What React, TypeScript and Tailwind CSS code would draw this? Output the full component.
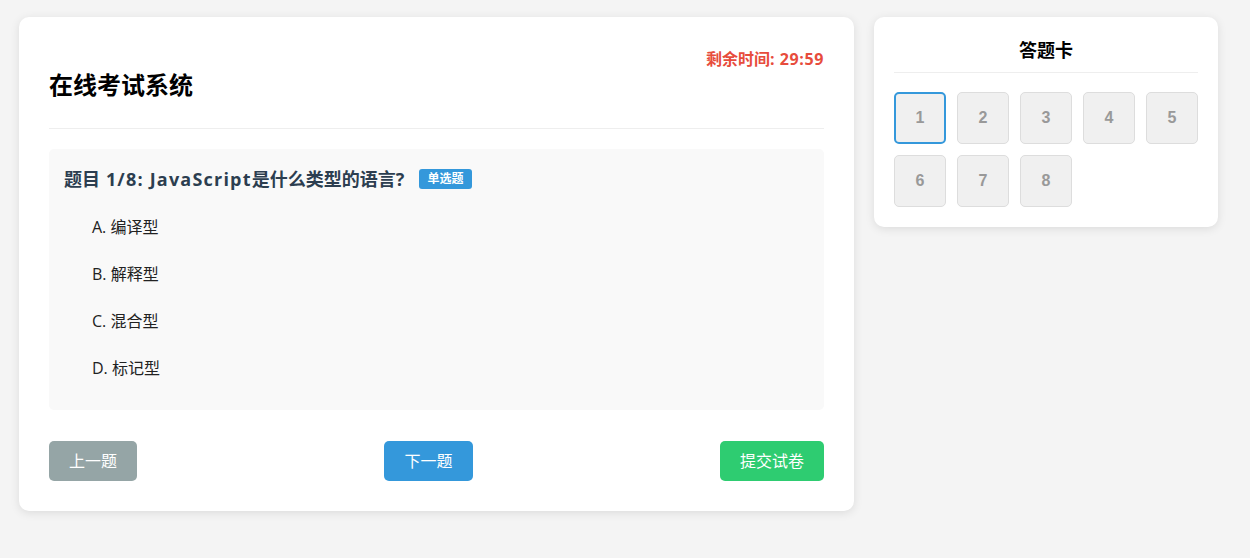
import React from "react";

const font = { fontFamily: '"Open Sans", "Noto Sans CJK SC", sans-serif' };

export default function App() {
  const options = ["A. 编译型", "B. 解释型", "C. 混合型", "D. 标记型"];
  const nums = [1, 2, 3, 4, 5, 6, 7, 8];
  return (
    <div
      className="min-h-[558px] bg-[#f4f4f4] pl-[19px] pt-[17px] flex items-start gap-[20px]"
      style={font}
    >
      <div className="w-[835px] bg-white rounded-[10px] shadow-[0_2px_10px_rgba(0,0,0,0.1)] p-[30px]">
        <div className="border-b border-[#eee] pb-[29px]">
          <div className="h-[24px] text-right text-[16px] leading-[24px] font-bold text-[#e74c3c]">
            剩余时间<span className="tracking-[0.6px]">: 29:59</span>
          </div>
          <h1 className="text-[24px] leading-[28px] font-bold text-black">在线考试系统</h1>
        </div>
        <div className="mt-[20px] bg-[#f9f9f9] rounded-[5px] px-[15px] pt-[16px] pb-[18px]">
          <div className="flex items-center text-[18px] leading-[28px] font-bold text-[#2c3e50]">
            <span>
              题目<span className="tracking-[1.2px]"> 1/8: JavaScript</span>是什么类型的语言
              <span className="tracking-[1.2px]">?</span>
            </span>
            <span className="ml-[14px] bg-[#3498db] text-white text-[12px] leading-[20px] px-[8px] rounded-[3px] font-bold">
              单选题
            </span>
          </div>
          <div className="mt-[11px] pl-[28px]">
            {options.map((o) => (
              <div key={o} className="py-[12px] text-[16px] leading-[23px] text-[#222]">
                {o}
              </div>
            ))}
          </div>
        </div>
        <div className="mt-[31px] flex justify-between">
          <button className="h-[40px] px-[20px] rounded-[5px] bg-[#95a5a6] text-white text-[16px]">上一题</button>
          <button className="h-[40px] px-[20px] rounded-[5px] bg-[#3498db] text-white text-[16px]">下一题</button>
          <button className="h-[40px] px-[20px] rounded-[5px] bg-[#2ecc71] text-white text-[16px]">提交试卷</button>
        </div>
      </div>
      <div className="w-[344px] bg-white rounded-[10px] shadow-[0_2px_10px_rgba(0,0,0,0.1)] p-[20px]">
        <div className="text-center text-[18px] leading-[27px] font-bold text-black pb-[8px] border-b border-[#eee]">
          答题卡
        </div>
        <div className="mt-[19px] grid grid-cols-[repeat(5,52px)] auto-rows-[52px] gap-[11px]">
          {nums.map((n) => (
            <div
              key={n}
              className={
                "flex items-center justify-center rounded-[5px] bg-[#f0f0f0] text-[16px] font-bold text-[#999] font-['Liberation_Sans',Arial,sans-serif] " +
                (n === 1 ? "border-2 border-[#3498db]" : "border border-[#ddd]")
              }
            >
              {n}
            </div>
          ))}
        </div>
      </div>
    </div>
  );
}
